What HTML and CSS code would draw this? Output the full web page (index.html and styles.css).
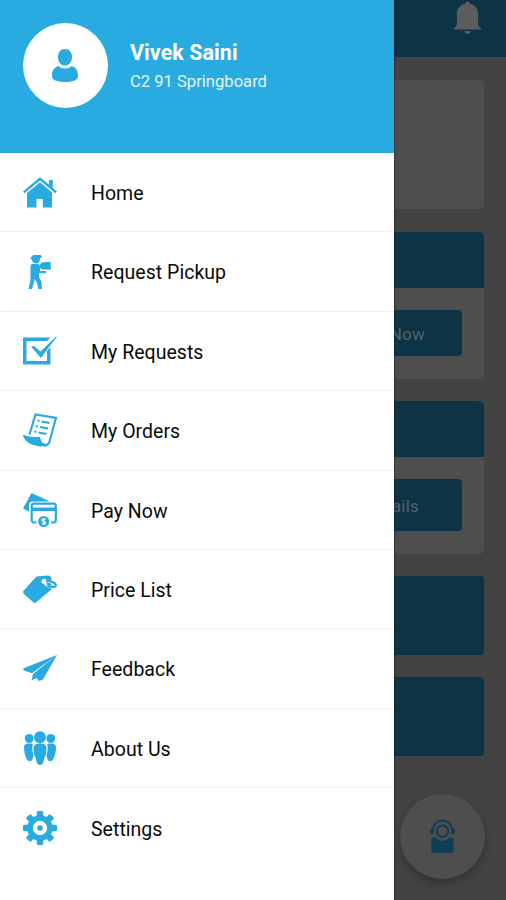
FILE: index.html
```html
<!DOCTYPE html>
<html lang="en">
<head>
<meta charset="utf-8">
<title>Menu</title>
<link rel="stylesheet" href="styles.css">
</head>
<body>
<div class="screen">
  <main class="page">
    <header class="topbar">
      <svg class="bell" viewBox="0 0 30 34"><path d="M15 0c-1.500 0-2.300 1-2.300 2.200C7.500 3.200 4 7 4 13v10c0 2-1 3.500-3.500 5v1h29v-1C27 26.500 26 25 26 23V13c0-6-3.500-9.800-8.700-10.800C17.300 1 16.500 0 15 0zM11.500 30.500c.5 2 1.700 3 3.500 3s3-1 3.500-3z"/></svg>
    </header>
    <div class="content">
      <section class="card banner"></section>
      <section class="card"><div class="card-head"></div><div class="card-body"><div class="button now">Now</div></div></section>
      <section class="card second"><div class="card-head"></div><div class="card-body"><div class="button details">ails</div></div></section>
      <section class="tile"></section>
      <section class="tile"></section>
    </div>
    <div class="fab">
      <svg viewBox="0 0 26 36"><path d="M1.500 35V21.500c0-1.500.8-2.500 2.500-2.500h2c2 2.500 4 3.500 7 3.500s5-1 7-3.500h2c1.700 0 2.500 1 2.500 2.500V35z"/><circle cx="13" cy="12.500" r="6" class="line"/><path class="line" d="M2.500 12C3.500 5.500 7.500 1.500 13 1.500S22.500 5.500 23.500 12"/><path d="M0 10h4v5.500H2c-1.500 0-2-1-2-2zM22 10h4v3.500c0 1-.5 2-2 2h-2z"/></svg>
    </div>
  </main>
  <aside class="drawer">
    <header class="profile">
      <div class="avatar"><svg viewBox="0 0 26 34"><path d="M13 0c4.500 0 7 3 7 8 0 5-3 8.500-7 8.500S6 13 6 8c0-5 2.500-8 7-8zM6.500 17C8 18.700 10 19.500 13 19.500s5-.8 6.500-2.500c4 1 6.500 4.500 6.500 9 0 4-2 5.200-5 6-4.500 1.300-11.500 1.300-16 0-3-.8-5-2-5-6 0-4.500 2.500-8 6.500-9z"/></svg></div>
      <div class="who"><div class="name">Vivek Saini</div><div class="place">C2 91 Springboard</div></div>
    </header>
    <nav class="menu">
      <a class="item"><svg viewBox="0 0 34 34"><path d="M17 2.200 0 16.500l1.500 1.800L17 5.500l15.500 12.800L34 16.500l-4.200-3.600V5h-3.700v4.800zM17 7.300 4 18v14.500h9.500V24h6.300v8.500h9.200V17.200z"/></svg><span>Home</span></a>
      <a class="item"><svg viewBox="0 0 34 34"><path d="M11 0h7l1 2-2 1.500c0 3-1.500 5-4 5-2.700 0-4-1.800-4.200-4L7.500 4C8 2 9 .5 11 0zM9.500 9h5c1.500 0 2.500 1 2.500 3v4h6v2.200h-7V22l2.500 5 .5 7h-3.500L14 28l-2.200-4-1.300 5L9 34H5.500l2-8.500V12C7.500 10 8 9 9.500 9zM18.500 7.500l9-.8.500 7.800h-9.500l-1.500-2V9.500z"/></svg><span>Request Pickup</span></a>
      <a class="item"><svg viewBox="0 0 34 34"><path d="M0 3.500h27.500L24 7H3.500v20H24V17l3.500-4v17.500H0zM8 12.500l3-.5 6.500 5.500L33 2.500h1L18 24z"/></svg><span>My Requests</span></a>
      <a class="item"><svg viewBox="0 0 34 34"><path class="line" d="M6.500 21.500 12.500 1.500 33 5 26.500 28.500c-1 3-3 4.500-6 4"/><path d="M0 21.500c5 2.500 11 2.500 17 2.500 1.500 5 2.500 7 6.500 6.500-1 2-3 3-5 3C11 33 1 30 0 21.500z"/><path class="line dashed" d="m14.500 7.500 2 .5m2 .5 8 1.500M13 13l2 .5m2 .5 8 1.500M11.500 18.500l2 .5m2 .5 8 1.500"/></svg><span>My Orders</span></a>
      <a class="item"><svg viewBox="0 0 34 34"><path d="M8.500 0 27 8.500H10c-2.500 0-4 1.500-4 4v6L0 15.500z"/><path class="line" d="M13.500 29.500H11c-1.500 0-2.300-1-2.300-2.300V13c0-1.500.8-2.300 2.300-2.300h19.500c1.500 0 2.300.8 2.300 2.300v14.200c0 1.300-.8 2.300-2.300 2.300H28"/><path d="M8.500 14.500h24.800v3.500H8.500z"/><circle cx="20.700" cy="28.500" r="5.600"/><path class="white-line" d="M22.500 26.500c-1-1-3.600-.8-3.600.6 0 1.800 3.700.9 3.700 2.800 0 1.400-2.500 1.600-3.700.5M20.700 25v7"/></svg><span>Pay Now</span></a>
      <a class="item"><svg viewBox="0 0 34 34"><path fill-rule="evenodd" d="M13.500 4.500 25 3.500c2 0 3.200 1 3.300 3v11L13.500 30c-1.300 1.200-2.200 1.200-3.500 0L1 22c-1.300-1.200-1.300-2.500 0-3.700zM19.500 7.500c-2 1.500-1 4.500 1.500 4.500 1.500 2.800 4.500 3.500 7.300 3.700v-2c-2.300-.1-4-.8-5-2.200 1.500-.8 5-.5 5 .5V9.500c-1.500-.7-3-.8-4.500-.5-1-2-2.800-2.500-4.300-1.500z"/><path class="line" d="M23 9.700c4-1.500 10 1.300 9.900 3.800-.1 2-5.900 2-8.900-.8"/></svg><span>Price List</span></a>
      <a class="item"><svg viewBox="0 0 34 34"><path d="M34 3 0 16.500l1 2 8 2.700zM34 3 10 22l-1.500 6.500 5-2.500 2.500 3 4-1.500z"/></svg><span>Feedback</span></a>
      <a class="item"><svg viewBox="0 0 34 34"><circle cx="6.300" cy="7.500" r="4.500"/><circle cx="27.700" cy="7.500" r="4.500"/><path d="M1 16c0-2.500 2-3.500 4.500-3.500h3c1 0 1.500.5 1.200 1.500-1 5 .2 8 1 10l-1 4c-1.500 3-4.500 3-6 0C2 25 1 21 1 16zM33 16c0-2.500-2-3.500-4.500-3.500h-3c-1 0-1.500.5-1.200 1.500 1 5-.2 8-1 10l1 4c1.500 3 4.500 3 6 0C32 25 33 21 33 16z"/><g class="front"><circle cx="17" cy="6.300" r="6"/><path d="M17 12.500c4 0 6.500 1 6.500 5 0 5-1 8-2.500 10-.2 4-1.500 6.500-4 6.500s-3.800-2.500-4-6.500c-1.500-2-2.500-5-2.500-10 0-4 2.500-5 6.500-5z"/></g></svg><span>About Us</span></a>
      <a class="item"><svg viewBox="-17 -17 34 34"><defs><g id="teeth"><rect x="-3.200" y="-17" width="6.400" height="34" rx="1.300"/></g></defs><circle r="12.800"/><use href="#teeth"/><use href="#teeth" transform="rotate(45)"/><use href="#teeth" transform="rotate(90)"/><use href="#teeth" transform="rotate(135)"/><circle r="5" class="hub"/></svg><span>Settings</span></a>
    </nav>
  </aside>
</div>
</body>
</html>
```
FILE: styles.css
```css
* { box-sizing: border-box; }
body { margin: 0; font-family: Roboto, "Liberation Sans", sans-serif; }
svg { display: block; fill: currentColor; overflow: visible; }
.line { fill: none; stroke: currentColor; stroke-width: 2.2; }
.dashed { stroke-width: 2; }
.white-line { fill: none; stroke: #fff; stroke-width: 1.2; }
.hub { fill: #29abe2; stroke: #fff; stroke-width: 4.4; }
.front { stroke: #fff; stroke-width: 1.2; paint-order: stroke; }

.screen { position: relative; width: 506px; height: 900px; overflow: hidden; }
.page { height: 900px; background: #434343; }
.topbar { height: 57px; background: #0c3445; padding: 1px 24px 0 0; display: flex; justify-content: flex-end; }
.bell { width: 29px; height: 34px; color: #5c5c5c; }
.content { padding: 23px 22px 0; display: flex; flex-direction: column; }
.card { height: 147px; margin-bottom: 22px; border-radius: 5px; background: #4e4e4e; overflow: hidden; }
.banner { height: 129px; margin-bottom: 23px; }
.second { height: 153px; }
.card-head { height: 56px; background: #0c3445; }
.card-body { padding: 22px 22px 0; display: flex; justify-content: flex-end; }
.button { display: flex; justify-content: flex-end; align-items: center; width: 180px; height: 46px; border-radius: 4px; background: #0c3445; color: #56626a; font-size: 17px; letter-spacing: .2px; }
.now { padding: 2px 37px 0 0; }
.details { height: 52px; padding: 2px 43px 0 0; }
.tile { height: 79px; margin-bottom: 22px; border-radius: 4px; background: #0c3445; }
.fab { position: absolute; left: 400px; top: 794px; width: 85px; height: 85px; border-radius: 50%; background: #4e4e4e; color: #0c3f54; display: flex; align-items: center; justify-content: center; box-shadow: 0 4px 8px rgba(0, 0, 0, .28); }
.fab svg { width: 25px; height: 35px; }

.drawer { position: absolute; left: 0; top: 0; width: 394px; height: 900px; background: #fff; box-shadow: 0 0 2px #111; }
.profile { height: 153px; padding: 23px 0 0 23px; background: #29abe2; display: flex; align-items: flex-start; gap: 22px; }
.avatar { width: 85px; height: 85px; border-radius: 50%; background: #fff; color: #29abe2; display: flex; align-items: center; justify-content: center; }
.avatar svg { width: 26px; height: 34px; margin-right: 1px; }
.who { padding-top: 15px; color: #fff; }
.name { font-size: 21.500px; line-height: 29px; font-weight: 700; letter-spacing: .05px; }
.place { font-size: 16.600px; line-height: 30px; color: #e3f5fc; }
.item { display: flex; align-items: center; gap: 34px; height: 79.400px; padding-left: 23px; border-bottom: 1.500px solid #eee; color: #29abe2; }
.item:last-child { border-bottom: 0; }
.item svg { width: 34px; height: 34px; }
.item span { color: #0a0a0a; font-size: 19.500px; letter-spacing: .03px; line-height: 24px; padding-top: 3.500px; }
```
